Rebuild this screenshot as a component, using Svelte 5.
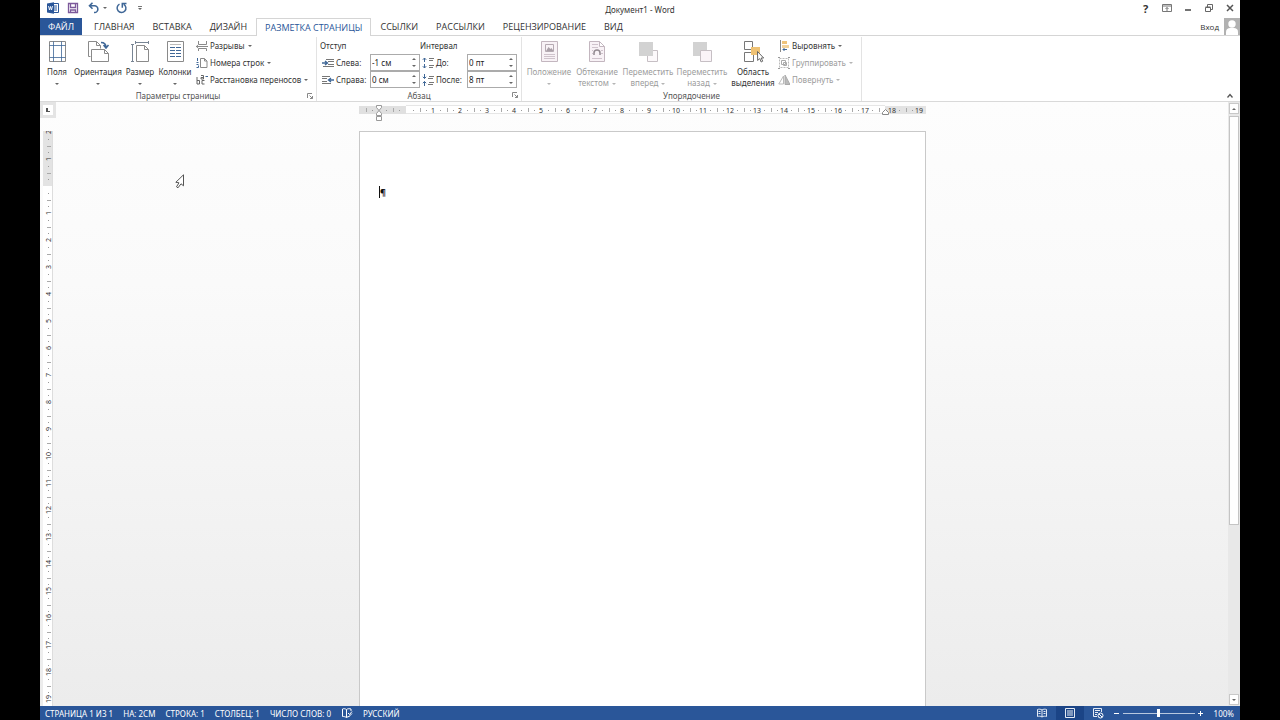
<script>
  const G = '#8a8a8a';
  const B = '#3f6797';
  const svg = (w, h, body) =>
    `<svg width="${w}" height="${h}" viewBox="0 0 ${w} ${h}" fill="none" stroke="${G}" aria-hidden="true">${body}</svg>`;

  const icons = {
    word: svg(12, 12, `<path d="M6 1.500h5.500v9H6" stroke="#2a5699" fill="#fff"/><path d="M7 4h3M7 6h3M7 8h3" stroke="#2a5699"/><path d="M0 1.500 7 .3v11.400L0 10.500z" fill="#2a5699" stroke="none"/><path d="m1.500 4 1 4 1-3.500 1 3.500 1-4" stroke="#fff" stroke-width=".9"/>`),
    save: svg(12, 12, `<path d="M1.500 1.500h9v9h-9zM3.500 1.500v4h5v-4M3.500 10.500V8h5v2.500" stroke="#7d5a9b" stroke-width="1.300"/>`),
    undo: svg(12, 12, `<path d="M5.500.8 2.500 3.800l3 3M2.800 3.800h4.700a3.300 3.300 0 0 1 0 6.700H7" stroke="${B}" stroke-width="1.600"/>`),
    redo: svg(12, 12, `<path d="M4.500 2.200A4.400 4.400 0 1 0 8.700 2.300M7.300 5.700V1.500H11.500" stroke="${B}" stroke-width="1.500"/>`),
    margins: svg(24, 22, `<path d="M4.500.5h16v20h-16z"/><path d="M8.500.5v20M16.500.5v20M4.500 4.500h16M4.500 16.500h16" stroke="${B}" stroke-opacity=".8"/>`),
    orient: svg(24, 22, `<path d="M4.500 15.500h-2V.5h8l4 4v3M10.500.5v4h4"/><path d="M5.500 8.500h13l4 4v8h-17zM18.500 8.500v4h4" fill="#fff"/><path d="M15 1.500c4 0 5 2 5 5M17.500 4l2.500 3 2.500-3" stroke="${B}" stroke-width="1.500"/>`),
    size: svg(24, 22, `<path d="M8.500 4.500h8l4 4v12h-12zM16.500 4.500v4h4"/><path d="M4.500 3.500v17M3 3.500h3M3 20.500h3M7.500 1.500h13M7.500 0v3M20.500 0v3" stroke="#788594"/>`),
    columns: svg(24, 22, `<path d="M4.500.5h16v20h-16z"/><path d="M7 3.500h11" stroke="#bbb"/><path d="M7 6.500h5M7 9.500h5M7 12.500h5M7 15.500h5M13 6.500h5M13 9.500h5M13 12.500h5M13 15.500h5" stroke="${B}"/>`),
    breaks: svg(12, 12, `<path d="M2.500 1v3.500h8V1M2.500 11V8.500h8V11"/><path d="M0 6.500h12M2 4.800.5 6.500 2 8.200"/>`),
    lines: svg(12, 12, `<path d="M4.500 1.500h4l2.500 2.500v6.500H4.500zM8.500 1.500V4H11"/><path d="M1.500 1v3M.5 5.500h2M.5 7.500h2M.5 10.500h2v-2" stroke="${B}"/>`),
    hyphen: svg(12, 12, `<path d="M1 3v7M1 6.500h2.500v3.500H1M8.500 6.500H6V10h2.500" stroke="#666"/><path d="M5 1.500h2.500V5H5V3.500h2.500" stroke="#666"/><path d="M9.500 2.500H12" stroke="${B}"/>`),
    left: svg(12, 12, `<path d="M4 2.500h8M6 4.500h6M6 7.500h6M1 9.500h11" stroke="#777"/><path d="M0 6h5M3 4l2.500 2L3 8" stroke="${B}" stroke-width="1.400"/>`),
    right: svg(12, 12, `<path d="M0 2.500h8M0 4.500h5M0 7.500h5M0 9.500h9" stroke="#777"/><path d="M12 6H7M9 4 6.500 6 9 8" stroke="${B}" stroke-width="1.400"/>`),
    before: svg(12, 12, `<path d="M7 1.500h5M7 3.500h4M7 8.500h5M7 10.500h4" stroke="#777"/><path d="M2.500 5V1M.8 2.800 2.500 1l1.700 1.800M2.500 7v4M.8 9.200 2.500 11l1.700-1.800" stroke="${B}"/>`),
    after: svg(12, 12, `<path d="M7 2.500h5M6 4.500h5M7 8.500h5M6 10.500h5" stroke="#777"/><path d="M2.500 0v4.500M.8 2.800l1.700 1.700 1.700-1.700M2.500 12V7.500M.8 9.200l1.700-1.700 1.700 1.700" stroke="${B}"/>`),
    position: svg(24, 22, `<path d="M4.500.5h16v20h-16z" fill="#f8f2f6" stroke="#c3b6bf"/><path d="M8.500 3.500h8v7h-8z" stroke="#b5aab2"/><path d="m9 10 2.500-4 2 2 1-1 2 3z" fill="#aaa0a8" stroke="none"/><path d="M7 13.500h11M7 15.500h11M7 17.500h11" stroke="#cfc3cc"/>`),
    wrap: svg(24, 22, `<path d="M4.500.5h10l5 5v15h-15zM14.500.5v5h5" fill="#f8f2f6" stroke="#c3b6bf"/><path d="M7 3.500h6M7 6.500h6M7 17.500h10M7 9.500h1M16 9.500h2M7 12.500h1M16 12.500h2" stroke="#cfc3cc"/><path d="M9 14v-2a3 3 0 0 1 6 0v2" stroke="#938b91" stroke-width="1.500"/>`),
    forward: svg(24, 22, `<path d="M11.500 9.500h10v11h-10z" fill="#fcf9fb" stroke="#c6bfc4"/><path d="M3 1h14v14H3z" fill="#d2d2d2" stroke="none"/>`),
    backward: svg(24, 22, `<path d="M3 1h14v14H3z" fill="#d2d2d2" stroke="none"/><path d="M10.500 9.500h11v11h-11z" fill="#faf4f8" stroke="#c6bfc4"/>`),
    selection: svg(24, 22, `<path d="M3.500.5h8v8h-8zM3.500 11.500h9v9h-9z" fill="#fff" stroke="#777"/><path d="M10 6h9v8h-9z" fill="#efc274" stroke="none"/><path d="m16.500 10.500.2 9 2-2 1.500 3.500 1.500-.8-1.500-3.200h2.500z" fill="#fff" stroke="#666"/>`),
    align: svg(12, 12, `<path d="M2.500 0v12" stroke="#888"/><path d="M4 1h5v3H4z" fill="#eec37b" stroke="none"/><path d="M4 5h7v3H4z" fill="#f2d29b" stroke="none"/><path d="M9 9.500H5M6.500 8 5 9.500 6.500 11" stroke="${B}"/>`),
    group: svg(12, 12, `<path d="M1.500 1.500h9v9h-9z" stroke="#bbb" stroke-dasharray="2 1"/><path d="M3.500 3.500h4v4h-4zM5.500 5.500h3v3h-3z" stroke="#aaa"/><path d="M0 .5h2M10 .5h2M0 11.500h2M10 11.500h2" stroke="#999"/>`),
    rotate: svg(12, 12, `<path d="M5.500 2v8H.8z" stroke="#bbb"/><path d="M7 1v9.500h5z" fill="#bbb" stroke="#aaa"/>`),
    launch: svg(6, 6, `<path d="M.5 5V.5H5M2.500 2.500l3 3M5.500 3v2.500H3" stroke="#888"/>`),
    ribbon: svg(12, 10, `<path d="M1.500 1.500h9v7h-9zM1.500 3h9M6 8V4.500M4.500 6 6 4.500 7.500 6" stroke="#777"/>`),
    min: svg(12, 10, `<path d="M3 7h6" stroke="#444" stroke-width="1.500"/>`),
    restore: svg(12, 10, `<path d="M2.500 4.500h5v4h-5zM4.500 4.500v-3h5v5h-2M2.500 4h5" stroke="#666"/>`),
    close: svg(12, 10, `<path d="m3 2 6 6M9 2 3 8" stroke="#555" stroke-width="1.500"/>`),
    collapse: svg(8, 6, `<path d="m1.500 4.500 2.500-3 2.500 3" stroke="#555" stroke-width="1.300"/>`),
    user: svg(16, 17, `<path d="M0 0h16v17H0z" fill="#b1b1b1" stroke="none"/><circle cx="8" cy="6" r="3.700" fill="#fff" stroke="none"/><path d="M2 17v-3c0-3 2-4 4-4h4c2 0 4 1 4 4v3z" fill="#fff" stroke="none"/>`),
    proof: svg(12, 12, `<path d="M5.500 2.500C4 1.500 2.500 1.500 1.500 2v7.500c1 0 2.500 0 4 1 1-.8 2-1 3-1M5.500 2.500v8M5.500 2.500c1.500-1 3-1 4.500-.5v2" stroke="#fff"/><path d="m7 6 1.500 1.500L11 4.500M8 9.500l3-3" stroke="#fff"/>`),
    read: svg(12, 12, `<path d="M6 3C4.500 2 3 2 1.500 2.500v7c1.500-.5 3-.5 4.500.5 1.500-1 3-1 4.500-.5v-7C9 2 7.500 2 6 3zM6 3v7M2.500 4.500h2M2.500 6.500h2M7.500 4.500h2M7.500 6.500h2" stroke="#e4ebf5"/>`),
    print: svg(12, 12, `<path d="M1.500 1.500h9v9h-9zM3 4h6M3 6h6M3 8h6" stroke="#e4ebf5"/>`),
    web: svg(12, 12, `<path d="M5 9.500H1.500v-8h8V5M3 3.500h5M3 5.500h3M3 7.500h2" stroke="#e4ebf5"/><circle cx="8.500" cy="8.500" r="2.500" stroke="#fff"/><path d="m7 7 3 3" stroke="#fff"/>`)
  };

  const tabs = ['ГЛАВНАЯ', 'ВСТАВКА', 'ДИЗАЙН', 'РАЗМЕТКА СТРАНИЦЫ', 'ССЫЛКИ', 'РАССЫЛКИ', 'РЕЦЕНЗИРОВАНИЕ', 'ВИД'];
  const activeTab = 'РАЗМЕТКА СТРАНИЦЫ';

  const unit = 27;
  const hZero = 47;
  const vZero = 55;
  const quarters = (from, to) => Array.from({ length: to - from + 1 }, (_, i) => from + i).filter((q) => q % 4);
  const count = (n) => Array.from({ length: Math.max(0, n) }, (_, i) => i + 1);
  const at = (zero, q) => Math.round(zero + (q * unit) / 4);

  // The vertical scale carries only the numbers that fit in the window.
  let rulerHeight = $state(0);
  const vLast = $derived(Math.floor((rulerHeight - vZero - 5) / unit));
  const hTicks = quarters(-6, 76);
  const hNumbers = count(19);
  const vTicks = $derived(quarters(-7, Math.max(0, vLast * 4)));
  const vNumbers = $derived([-2, -1, ...count(vLast)]);

  let left = $state('-1 см');
  let right = $state('0 см');
  let before = $state('0 пт');
  let after = $state('8 пт');
  let zoom = $state(100);

  const step = (text, delta) => {
    const [n, u] = text.split(' ');
    return `${Number(n) + delta} ${u}`;
  };
</script>

{#snippet big(name, lines, arrow, disabled, size)}
  <button class="big {size}" {disabled}>
    {@html icons[name]}
    <span>{lines[0]}</span>
    <span>{lines[1] ?? ''}{#if arrow}<i class="arrow" class:alone={!lines[1]}></i>{/if}</span>
  </button>
{/snippet}

{#snippet small(name, text, disabled)}
  <button class="small" {disabled}>{@html icons[name]}<span>{text}</span><i class="arrow"></i></button>
{/snippet}

{#snippet spin(id, icon, text, value, set)}
  <div class="field">
    {@html icons[icon]}
    <label for={id}>{text}</label>
    <div class="spin">
      <input {id} type="text" {value} onchange={(e) => set(e.currentTarget.value)} />
      <div class="steps">
        <button aria-label="Увеличить" onclick={() => set(step(value, 1))}><i class="up"></i></button>
        <button aria-label="Уменьшить" onclick={() => set(step(value, -1))}><i class="arrow"></i></button>
      </div>
    </div>
  </div>
{/snippet}

<div class="screen">
  <div class="window">
    <header class="title">
      <div class="quick">
        {@html icons.word}
        <button aria-label="Сохранить">{@html icons.save}</button>
        <button aria-label="Отменить">{@html icons.undo}<i class="arrow"></i></button>
        <button aria-label="Повторить">{@html icons.redo}</button>
        <button class="custom" aria-label="Настройка панели"><i class="bar"></i><i class="arrow"></i></button>
      </div>
      <h1>Документ1 - Word</h1>
      <div class="controls">
        <button class="help">?</button>
        <button aria-label="Параметры ленты">{@html icons.ribbon}</button>
        <button aria-label="Свернуть">{@html icons.min}</button>
        <button aria-label="Восстановить">{@html icons.restore}</button>
        <button aria-label="Закрыть">{@html icons.close}</button>
      </div>
    </header>

    <nav class="tabs">
      <button class="file">ФАЙЛ</button>
      {#each tabs as tab}
        <button class="tab" class:active={tab === activeTab}>{tab}</button>
      {/each}
      <a class="login" href="#login">Вход {@html icons.user}</a>
    </nav>

    <section class="ribbon">
      <div class="group setup">
        <div class="tools">
          {@render big('margins', ['Поля'], true, false, 'w34')}
          {@render big('orient', ['Ориентация'], true, false, 'w48')}
          {@render big('size', ['Размер'], true, false, 'w36')}
          {@render big('columns', ['Колонки'], true, false, 'w34')}
          <div class="stack">
            {@render small('breaks', 'Разрывы', false)}
            {@render small('lines', 'Номера строк', false)}
            {@render small('hyphen', 'Расстановка переносов', false)}
          </div>
        </div>
        <footer><span>Параметры страницы</span><button aria-label="Параметры страницы: дополнительно">{@html icons.launch}</button></footer>
      </div>
      <div class="group para">
        <div class="tools">
          <div class="stack indent">
            <h2>Отступ</h2>
            {@render spin('left', 'left', 'Слева:', left, (v) => (left = v))}
            {@render spin('right', 'right', 'Справа:', right, (v) => (right = v))}
          </div>
          <div class="stack spacing">
            <h2>Интервал</h2>
            {@render spin('before', 'before', 'До:', before, (v) => (before = v))}
            {@render spin('after', 'after', 'После:', after, (v) => (after = v))}
          </div>
        </div>
        <footer><span>Абзац</span><button aria-label="Абзац: дополнительно">{@html icons.launch}</button></footer>
      </div>
      <div class="group arrange">
        <div class="tools">
          {@render big('position', ['Положение'], true, true, 'w48')}
          {@render big('wrap', ['Обтекание', 'текстом'], true, true, 'w48')}
          {@render big('forward', ['Переместить', 'вперед'], true, true, 'w54')}
          {@render big('backward', ['Переместить', 'назад'], true, true, 'w54')}
          {@render big('selection', ['Область', 'выделения'], false, false, 'w48')}
          <div class="stack">
            {@render small('align', 'Выровнять', false)}
            {@render small('group', 'Группировать', true)}
            {@render small('rotate', 'Повернуть', true)}
          </div>
        </div>
        <footer><span>Упорядочение</span></footer>
      </div>
      <button class="collapse" aria-label="Свернуть ленту">{@html icons.collapse}</button>
    </section>

    <main class="work">
      <aside class="side">
        <button class="tabstop" aria-label="Табуляция"><i></i></button>
        <div class="vruler" bind:clientHeight={rulerHeight}>
          <svg width="10" height={rulerHeight} aria-hidden="true">
            <rect width="10" height="100%" fill="#fff" />
            <rect width="10" height={vZero} fill="#e3e3e3" />
            {#each vTicks as q}
              {#if q % 2}
                <path d="M5 {at(vZero, q)}.5h1" stroke="#999" />
              {:else}
                <path d="M4 {at(vZero, q)}.5h4" stroke="#aaa" />
              {/if}
            {/each}
            {#each vNumbers as n}
              <text transform="translate(8 {vZero + n * unit}) rotate(-90)" text-anchor="middle">{Math.abs(n)}</text>
            {/each}
            <path d="M9.500 0v{rulerHeight}" stroke="#ddd" />
          </svg>
        </div>
      </aside>

      <div class="canvas">
        <svg class="hruler" width="567" height="17" aria-hidden="true">
          <rect width="567" height="8" y="1" fill="#fff" />
          <rect width={hZero} height="8" y="1" fill="#e0e0e0" />
          <rect x="526" width="41" height="8" y="1" fill="#e3e3e3" />
          <path d="M47 .5h479M47 8.500h479" stroke="#e6e6e6" />
          {#each hTicks as q}
            {#if q % 2}
              <path d="M{at(hZero, q)}.5 5v1" stroke="#999" />
            {:else}
              <path d="M{at(hZero, q)}.5 3v4" stroke="#aaa" />
            {/if}
          {/each}
          {#each hNumbers as n}
            <text x={hZero + n * unit} y="8" text-anchor="middle">{n}</text>
          {/each}
          <path d="M17.500.5h5v2L20 5.500l-2.500-3zM17.500 10.500v-2l2.500-3 2.500 3v2zM17.500 11.500h5v4h-5z" fill="#fff" stroke="#999" />
          <path d="M523.500 9.500v-2l3-3 3 3v2z" fill="#fff" stroke="#888" />
        </svg>
        <article class="page"><p><i class="caret"></i>¶</p></article>
        <svg class="pointer" width="10" height="16" viewBox="0 0 10 16" aria-hidden="true">
          <path d="M8.500.8v11L6 9.800l-3 4-1.500-1 2.500-4-3.200-.5z" fill="#fff" stroke="#555" />
        </svg>
      </div>

      <div class="scroll">
        <button aria-label="Вверх"><i class="up"></i></button>
        <div class="track"><div class="thumb"></div></div>
        <button aria-label="Вниз"><i class="arrow"></i></button>
      </div>
    </main>

    <footer class="status">
      <span>СТРАНИЦА 1 ИЗ 1</span>
      <span>НА: 2СМ</span>
      <span>СТРОКА: 1</span>
      <span>СТОЛБЕЦ: 1</span>
      <span>ЧИСЛО СЛОВ: 0</span>
      <button aria-label="Правописание">{@html icons.proof}</button>
      <span>РУССКИЙ</span>
      <div class="views">
        <button aria-label="Режим чтения">{@html icons.read}</button>
        <button class="on" aria-label="Разметка страницы">{@html icons.print}</button>
        <button aria-label="Веб-документ">{@html icons.web}</button>
      </div>
      <div class="zoom">
        <button aria-label="Уменьшить масштаб" onclick={() => (zoom -= 10)}><i class="minus"></i></button>
        <input type="range" min="10" max="190" bind:value={zoom} aria-label="Масштаб" />
        <button aria-label="Увеличить масштаб" onclick={() => (zoom += 10)}><i class="minus plus"></i></button>
      </div>
      <output>{zoom}%</output>
    </footer>
  </div>
</div>

<style>
  :global(body) { margin: 0; background: #000; }
  .screen { padding: 0 40px; background: #000; font: 8px/11px "Noto Sans", "Open Sans", sans-serif; color: #333; }
  .screen :global(*) { box-sizing: border-box; }
  .screen :global(svg) { display: block; flex: none; }
  .window { display: flex; flex-direction: column; min-height: 100vh; background: #fff; }
  button { display: flex; align-items: center; justify-content: center; margin: 0; padding: 0; border: 0; background: none; color: inherit; font: inherit; white-space: nowrap; }
  h1, h2, p { margin: 0; font: inherit; }

  .arrow, .up { display: inline-block; flex: none; width: 0; height: 0; border: 2px solid transparent; border-top-color: #666; border-bottom-width: 0; }
  .up { border-top-width: 0; border-bottom: 2px solid #666; }

  .title { display: grid; grid-template-columns: 1fr auto 1fr; align-items: center; height: 18px; }
  .quick { display: flex; align-items: center; gap: 8px; padding: 0 0 2px 7px; }
  .quick button { gap: 4px; }
  .custom { flex-direction: column; width: 10px; }
  .custom .bar { width: 4px; height: 1px; background: #777; }
  .quick .custom { gap: 1px; }
  .controls { display: flex; justify-content: flex-end; padding-bottom: 2px; }
  .controls button { width: 21px; height: 16px; }
  .controls .help { font-size: 11px; font-weight: 700; }

  .tabs { display: flex; height: 18px; border-bottom: 1px solid #d5d5d5; font: 9px/11px "Open Sans", "Noto Sans", sans-serif; }
  .tabs button { height: 17px; }
  .file { width: 42px; margin-right: 3px; background: #2a5699; color: #fff; }
  .tab { padding: 0 9px; }
  .tabs .active { height: 18px; padding: 0 8px 1px; border: 1px solid #d5d5d5; border-bottom: 0; background: #fff; color: #2a5699; }
  .login { display: flex; align-items: center; gap: 5px; height: 17px; margin-left: auto; color: inherit; text-decoration: none; font-size: 8px; }

  .ribbon { display: flex; height: 66px; padding-top: 1px; border-bottom: 1px solid #d9d9d9; }
  .group { display: flex; flex: none; flex-direction: column; border-right: 1px solid #e3e3e3; }
  .setup { width: 277px; }
  .para { width: 205px; }
  .arrange { width: 340px; }
  .tools { display: flex; flex: 1; }
  .group footer { display: grid; grid-template-columns: 12px 1fr 12px; height: 12px; align-items: center; text-align: center; color: #555; }
  .group footer span { grid-column: 2; }
  .big { flex: none; flex-direction: column; justify-content: flex-start; height: 53px; padding-top: 4px; }
  .big span { height: 11px; }
  .big :global(svg) { margin-bottom: 3px; }
  .big span .arrow, .small .arrow { margin-left: 3px; vertical-align: middle; }
  .big span .alone { margin-left: 0; }
  .w34 { width: 34px; }
  .w36 { width: 36px; }
  .w48 { width: 48px; }
  .w54 { width: 54px; }
  .stack { display: flex; flex: none; flex-direction: column; }
  .small { justify-content: flex-start; height: 17px; }
  .small span { margin-left: 2px; }
  .setup .stack { margin-left: 4px; }
  .arrange .stack { margin-left: 1px; }
  .arrange .tools { padding-left: 3px; }
  button:disabled { color: #9c9c9c; }
  button:disabled .arrow { border-top-color: #b5b5b5; }
  .para .tools { padding-left: 3px; }
  .indent { width: 100px; }
  .spacing { width: 97px; }
  h2 { height: 17px; line-height: 17px; }
  .field { display: flex; align-items: center; height: 17px; }
  .indent .field, .spacing .field { padding-left: 2px; }
  .field label { flex: 1; margin-left: 2px; white-space: nowrap; }
  .spin { display: flex; width: 50px; height: 17px; border: 1px solid #ababab; background: #fff; }
  .spin input { flex: 1; width: 20px; padding: 0 0 0 1px; border: 0; outline: 0; background: none; color: #222; font: inherit; }
  .steps { display: flex; flex-direction: column; width: 10px; }
  .steps button { flex: 1; }
  .collapse { align-self: flex-end; width: 21px; height: 10px; margin-left: auto; }

  .work { display: flex; flex: 1; background: linear-gradient(#fdfdfd, #fafafa 30%, #ececec); }
  .side { display: flex; flex-direction: column; width: 17px; }
  .tabstop { width: 16px; height: 16px; border: 3px solid #e4e4e4; background: #fff; }
  .tabstop i { width: 4px; height: 4px; border: 2px solid #555; border-width: 0 0 1px 2px; }
  .vruler { flex: 1 1 0; margin: 13px 0 0 3px; overflow: hidden; }
  .vruler text, .hruler text { font-size: 7px; fill: #333; }
  .canvas { position: relative; display: flex; flex: 1; flex-direction: column; align-items: center; }
  .hruler { margin: 3px 0 9px; }
  .page { flex: 1; width: 567px; padding: 54px 19px; border: 1px solid #c9c9c9; border-bottom: 0; background: #fff; }
  .page p { display: flex; align-items: center; color: #111; font-size: 9px; font-weight: 700; }
  .caret { width: 1px; height: 12px; background: #111; }
  .pointer { position: absolute; left: 118px; top: 72px; }
  .scroll { display: flex; flex-direction: column; align-items: center; gap: 2px; width: 12px; padding: 1px 0; background: #e8e8e8; }
  .scroll button { width: 10px; height: 11px; border: 1px solid #c8c8c8; background: #fff; }
  .track { display: flex; flex: 1; flex-direction: column; width: 10px; }
  .thumb { height: 71%; border: 1px solid #c4c4c4; background: #fff; }

  .status { display: flex; align-items: center; gap: 10px; height: 14px; padding: 0 6px 0 5px; background: #2a5699; color: #fff; white-space: nowrap; }
  .views { display: flex; margin-left: auto; }
  .views button { width: 28px; height: 14px; }
  .views .on { background: #1b4486; }
  .zoom { display: flex; align-items: center; gap: 3px; margin-left: -8px; }
  .zoom button { width: 6px; height: 14px; }
  .minus { position: relative; width: 5px; height: 1px; background: #fff; }
  .plus::after { content: ""; position: absolute; left: 2px; top: -2px; width: 1px; height: 5px; background: #fff; }
  .zoom input { width: 72px; height: 12px; margin: 0; appearance: none; background: linear-gradient(#b8c8df, #b8c8df) center / 100% 1px no-repeat; }
  .zoom input::-webkit-slider-thumb { appearance: none; width: 3px; height: 8px; background: #fff; }
</style>
